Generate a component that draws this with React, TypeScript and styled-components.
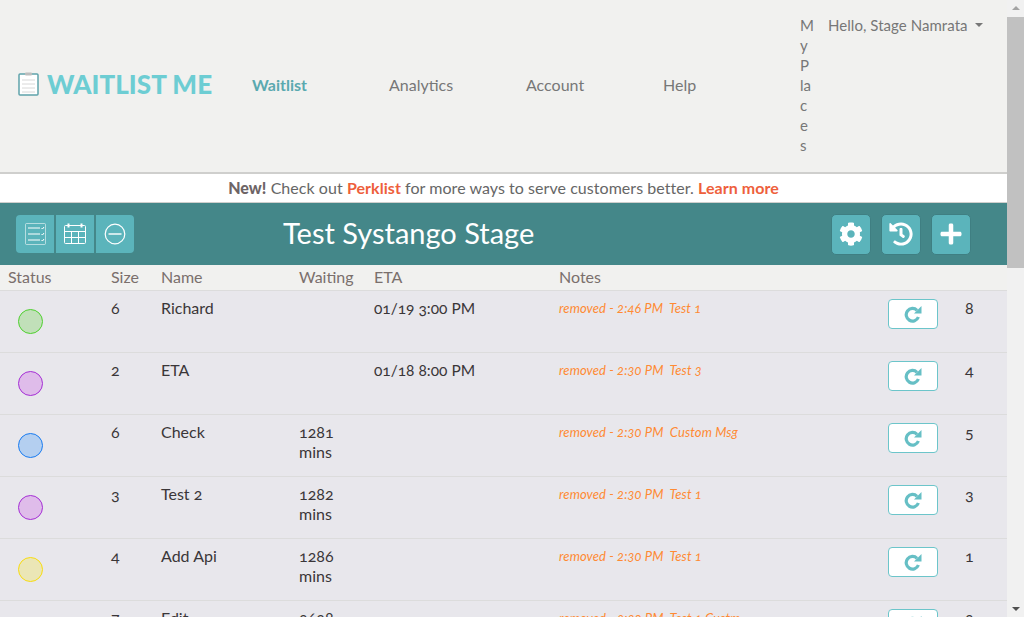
import React from 'react';
import styled, { createGlobalStyle } from 'styled-components';
import { FaCog, FaHistory, FaPlus } from 'react-icons/fa';

const GlobalStyle = createGlobalStyle`
  html, body, #root {
    height: 100%;
  }
  body {
    margin: 0;
    overflow: hidden;
    font-family: "Lato", "Open Sans", "Liberation Sans", sans-serif;
    font-size: 16px;
    font-variant-numeric: oldstyle-nums;
    color: #333;
  }
`;

const Shell = styled.div`
  display: flex;
  height: 100%;
  background: #f1f1ef;
`;

const Main = styled.main`
  flex: 1;
  min-width: 0;
  overflow: hidden;
`;

const ScrollTrack = styled.aside`
  display: flex;
  flex-direction: column;
  align-items: center;
  width: 17px;
  background: #f1f1f1;
`;

const ScrollArrow = styled.span<{ $down?: boolean }>`
  flex: none;
  width: 0;
  height: 0;
  margin: ${p => (p.$down ? 'auto 0 6px' : '6px 0 7px')};
  border-left: 4px solid transparent;
  border-right: 4px solid transparent;
  border-top: ${p => (p.$down ? '4px solid #505050' : 'none')};
  border-bottom: ${p => (p.$down ? 'none' : '4px solid #a3a3a3')};
`;

const ScrollThumb = styled.div`
  width: 100%;
  height: 251px;
  background: #c1c1c1;
`;

const Header = styled.header`
  display: flex;
  height: 172px;
  background: #f1f1ef;
  border-bottom: 2px solid #cfcfcd;
`;

const Brand = styled.div`
  display: flex;
  align-items: center;
  gap: 6px;
  width: 252px;
  height: 168px;
  padding-left: 18px;
  box-sizing: border-box;
`;

const BrandName = styled.span`
  font-size: 26px;
  font-weight: 900;
  letter-spacing: 0.05px;
  color: #6dcdd3;
  white-space: nowrap;
`;

const Nav = styled.nav`
  display: flex;
  align-items: center;
  width: 548px;
  height: 168px;
`;

const NavLink = styled.a<{ $active?: boolean }>`
  width: 137px;
  font-size: 16px;
  font-weight: ${p => (p.$active ? 700 : 400)};
  color: ${p => (p.$active ? '#5aa9af' : '#777')};
`;

const MyPlaces = styled.a`
  width: 12px;
  margin-top: 15px;
  font-size: 15px;
  line-height: 20px;
  color: #777;
  word-break: break-all;
`;

const Hello = styled.a`
  display: flex;
  align-items: center;
  gap: 7px;
  height: 20px;
  margin: 15px 0 0 16px;
  font-size: 15px;
  letter-spacing: 0.05px;
  line-height: 20px;
  color: #777;
  white-space: nowrap;
`;

const Caret = styled.span`
  width: 0;
  height: 0;
  border-top: 4px solid #777;
  border-left: 4px solid transparent;
  border-right: 4px solid transparent;
`;

const Banner = styled.div`
  height: 28px;
  background: #fff;
  border-bottom: 1px solid #cfcfcd;
  font-size: 16px;
  letter-spacing: 0.05px;
  line-height: 28px;
  text-align: center;
  color: #666;
`;

const Strong = styled.b`
  font-weight: 900;
  color: #6d6466;
`;

const Accent = styled.b`
  color: #ee5f3c;
`;

const Bar = styled.div`
  display: flex;
  align-items: center;
  height: 62px;
  padding: 0 36px 0 16px;
  background: #448789;
`;

const ButtonGroup = styled.div`
  display: flex;
  gap: 2px;
`;

const GroupButton = styled.button<{ $pos?: 'first' | 'last' }>`
  display: flex;
  align-items: center;
  justify-content: center;
  width: 38px;
  height: 38px;
  padding: 0;
  background: #5bb4bb;
  border: none;
  border-radius: ${p =>
    p.$pos === 'first' ? '4px 0 0 4px' : p.$pos === 'last' ? '0 4px 4px 0' : '0'};
`;

const Title = styled.h1`
  flex: 1;
  margin: 0 0 4px 149px;
  font-size: 29px;
  font-weight: 400;
  color: #fff;
`;

const ActionButtons = styled.div`
  display: flex;
  gap: 10px;
`;

const ActionButton = styled.button`
  display: flex;
  align-items: center;
  justify-content: center;
  width: 40px;
  height: 41px;
  padding: 0;
  font-size: 24px;
  color: #fff;
  background: #5bb4bb;
  border: 1px solid #3f7f82;
  border-radius: 5px;
`;

const columns = '103px 50px 138px 75px 185px 329px 77px 1fr';

const HeadRow = styled.div`
  display: grid;
  grid-template-columns: ${columns};
  height: 25px;
  padding-left: 8px;
  background: #f1f1ef;
  border-bottom: 1px solid #dcdcdc;
  font-size: 16px;
  line-height: 23px;
  color: #7a6f6c;
`;

const List = styled.div`
  background: #e8e7ec;
`;

const Row = styled.div`
  display: grid;
  grid-template-columns: ${columns};
  box-sizing: border-box;
  height: 62px;
  padding: 7px 0 0 8px;
  border-bottom: 1px solid #dcdcdc;
  font-size: 16px;
  line-height: 20px;
  color: #3a3638;
`;

const Dot = styled.span<{ $fill: string; $edge: string }>`
  display: block;
  box-sizing: border-box;
  width: 25px;
  height: 25px;
  margin: 11px 0 0 10px;
  background: ${p => p.$fill};
  border: 1.5px solid ${p => p.$edge};
  border-radius: 50%;
`;

const Waiting = styled.div`
  max-width: 50px;
`;

const Eta = styled.div`
  font-size: 15.500px;
`;

const Note = styled.div`
  font-size: 13px;
  font-style: italic;
  letter-spacing: 0.1px;
  white-space: pre;
  color: #ff8a33;
`;

const RestoreButton = styled.button`
  display: flex;
  align-items: center;
  justify-content: center;
  box-sizing: border-box;
  width: 50px;
  height: 30px;
  margin-top: 1px;
  padding: 0;
  color: #66bfc5;
  background: #fff;
  border: 1px solid #6cc5ca;
  border-radius: 4px;
`;

const ChecklistIcon = () => (
  <svg width="24" height="24" viewBox="0 0 24 24" fill="none" stroke="#fff" strokeWidth="1">
    <rect x="2.5" y="1.5" width="20" height="21" rx="1" opacity="0.55" />
    <path d="M5 6h12M5 12h12M5 18h12" />
    <path d="M18.5 6l1 1 1.500-2M18.500 12l1 1 1.500-2M18.500 18l1 1 1.500-2" />
  </svg>
);

const CalendarIcon = () => (
  <svg width="24" height="24" viewBox="0 0 24 24" fill="none" stroke="#fff" strokeWidth="1">
    <rect x="1.500" y="3.500" width="21" height="18" rx="1" />
    <path d="M1.500 9.500h21M1.500 15.500h21M8.500 9.500v12M15.500 9.500v12" />
    <path d="M5.500 1.500v4M18.500 1.500v4" strokeWidth="2" />
  </svg>
);

const MinusCircleIcon = () => (
  <svg width="22" height="22" viewBox="0 0 22 22" fill="none" stroke="#fff">
    <circle cx="11" cy="11" r="9.800" strokeWidth="1.200" />
    <path d="M4.500 11h13" strokeWidth="2" opacity="0.7" />
  </svg>
);

const RepeatIcon = () => (
  <svg width="18" height="18" viewBox="0 0 18 18" fill="none">
    <path d="M13 5.300A6.300 6.300 0 1 0 14.400 12" stroke="currentColor" strokeWidth="3.200" />
    <path d="M17.500 1v7.500h-7.500z" fill="currentColor" />
  </svg>
);

type Party = {
  color: [string, string];
  size: number;
  name: string;
  waiting?: string;
  eta?: string;
  note: string;
  count: number;
};

const GREEN: [string, string] = ['#c1e0b9', '#4fd030'];
const PURPLE: [string, string] = ['#dfbcea', '#a52fd5'];
const BLUE: [string, string] = ['#b4cff0', '#1a7cf0'];
const YELLOW: [string, string] = ['#ebe6b6', '#f8dc10'];

const parties: Party[] = [
  { color: GREEN, size: 6, name: 'Richard', eta: '01/19 3:00 PM', note: 'removed - 2:46 PM  Test 1', count: 8 },
  { color: PURPLE, size: 2, name: 'ETA', eta: '01/18 8:00 PM', note: 'removed - 2:30 PM  Test 3', count: 4 },
  { color: BLUE, size: 6, name: 'Check', waiting: '1281 mins', note: 'removed - 2:30 PM  Custom Msg', count: 5 },
  { color: PURPLE, size: 3, name: 'Test 2', waiting: '1282 mins', note: 'removed - 2:30 PM  Test 1', count: 3 },
  { color: YELLOW, size: 4, name: 'Add Api', waiting: '1286 mins', note: 'removed - 2:30 PM  Test 1', count: 1 },
  { color: BLUE, size: 7, name: 'Edit', waiting: '2628 mins', note: 'removed - 2:30 PM  Test 1 Custm', count: 2 },
];

const App: React.FC = () => (
  <Shell>
    <GlobalStyle />
    <Main>
      <Header>
        <Brand>
          <svg width="23" height="24" viewBox="0 0 23 24" fill="none">
            <rect x="1" y="2" width="19" height="21" rx="1" fill="#fff" stroke="#5fa3ab" strokeWidth="1.500" />
            <rect x="7" y="0.500" width="7" height="3" rx="1" fill="#bdbdbd" />
            <path d="M4 8h13M4 12h13M4 16h13M4 20h13" stroke="#d8d8d8" />
          </svg>
          <BrandName>WAITLIST ME</BrandName>
        </Brand>
        <Nav>
          <NavLink $active>Waitlist</NavLink>
          <NavLink>Analytics</NavLink>
          <NavLink>Account</NavLink>
          <NavLink>Help</NavLink>
        </Nav>
        <MyPlaces>MyPlaces</MyPlaces>
        <Hello>
          Hello, Stage Namrata <Caret />
        </Hello>
      </Header>
      <Banner>
        <Strong>New!</Strong> Check out <Accent>Perklist</Accent> for more ways to serve customers better.{' '}
        <Accent>Learn more</Accent>
      </Banner>
      <Bar>
        <ButtonGroup>
          <GroupButton $pos="first"><ChecklistIcon /></GroupButton>
          <GroupButton><CalendarIcon /></GroupButton>
          <GroupButton $pos="last"><MinusCircleIcon /></GroupButton>
        </ButtonGroup>
        <Title>Test Systango Stage</Title>
        <ActionButtons>
          <ActionButton><FaCog /></ActionButton>
          <ActionButton><FaHistory /></ActionButton>
          <ActionButton><FaPlus /></ActionButton>
        </ActionButtons>
      </Bar>
      <HeadRow>
        <div>Status</div>
        <div>Size</div>
        <div>Name</div>
        <div>Waiting</div>
        <div>ETA</div>
        <div>Notes</div>
      </HeadRow>
      <List>
        {parties.map(p => (
          <Row key={p.name}>
            <div><Dot $fill={p.color[0]} $edge={p.color[1]} /></div>
            <div>{p.size}</div>
            <div>{p.name}</div>
            <Waiting>{p.waiting}</Waiting>
            <Eta>{p.eta}</Eta>
            <Note>{p.note}</Note>
            <div><RestoreButton><RepeatIcon /></RestoreButton></div>
            <div>{p.count}</div>
          </Row>
        ))}
      </List>
    </Main>
    <ScrollTrack>
      <ScrollArrow />
      <ScrollThumb />
      <ScrollArrow $down />
    </ScrollTrack>
  </Shell>
);

export default App;
